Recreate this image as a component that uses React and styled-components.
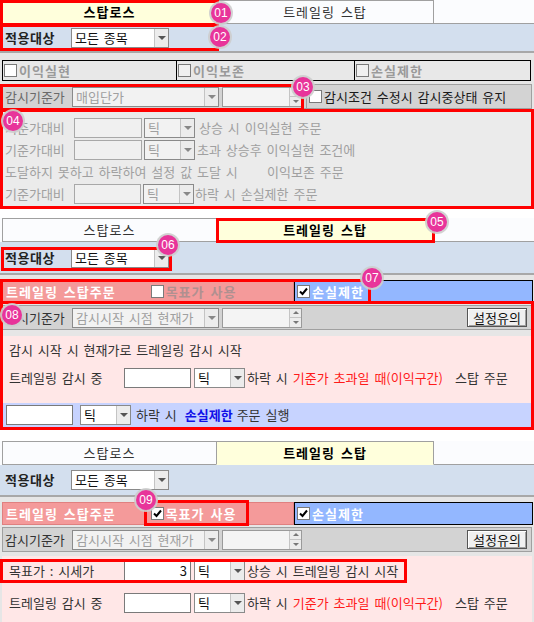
import React from "react";
import styled, { createGlobalStyle } from "styled-components";

const GlobalStyle = createGlobalStyle`
  html, body { margin: 0; padding: 0; background: #fff; }
  body {
    font-family: "Noto Sans CJK KR", "Noto Sans", sans-serif;
    font-size: 13px;
    line-height: 16px;
    word-spacing: 2px;
    color: #2a2a2a;
  }
  * { box-sizing: border-box; }
`;

const Page = styled.div`
  width: 534px;
  height: 622px;
  overflow: hidden;
  display: flex;
  flex-direction: column;
`;

const Panel = styled.div`
  position: relative;
  display: flex;
  flex-direction: column;
  background: #e6e6e6;
  margin-top: ${(p) => p.$top || 0}px;
`;

/* tabs */
const TabBar = styled.div`
  display: flex;
  height: 24px;
  padding-left: 2px;
  background: #fbfcfe;
`;

const Tab = styled.div`
  width: ${(p) => p.$w}px;
  display: flex;
  align-items: center;
  justify-content: center;
  border: 1px solid #a0a0a0;
  border-bottom-color: ${(p) => (p.$active ? "transparent" : "#a0a0a0")};
  margin-left: ${(p) => (p.$first ? 0 : -1)}px;
  background: ${(p) => (p.$active ? "#ffffdc" : "#fbfcfe")};
  font-weight: ${(p) => (p.$active ? 700 : 400)};
  color: ${(p) => (p.$active ? "#000" : "#333")};
  letter-spacing: 1px;
`;

const TabFill = styled.div`
  flex: 1;
  border-bottom: 1px solid #a0a0a0;
`;

/* 적용대상 */
const TargetRow = styled.div`
  height: ${(p) => p.$h}px;
  display: flex;
  align-items: center;
  padding-left: 5px;
  background: #d3dfee;
`;

const BoldLabel = styled.span`
  width: 66px;
  font-weight: 700;
  color: #222;
  letter-spacing: 0.5px;
`;

const Divider = styled.div`
  height: ${(p) => p.$h}px;
  border-top: 2px solid #a8a8a8;
  background: #e6e6e6;
`;

const Spacer = styled.div`
  height: ${(p) => p.$h}px;
  background: ${(p) => p.$bg || "#e6e6e6"};
`;

/* form parts */
const SelectBox = styled.div`
  display: flex;
  width: ${(p) => p.$w}px;
  height: 20px;
  margin-left: ${(p) => p.$ml || 0}px;
  border: 1px solid #8a8a8a;
  background: ${(p) => (p.$disabled ? "#f2f2f2" : "#fff")};
  color: ${(p) => (p.$disabled ? "#a0a0a0" : "#111")};
  flex-shrink: 0;
`;

const SelectText = styled.span`
  flex: 1;
  padding-left: 3px;
  line-height: 18px;
  white-space: nowrap;
  overflow: hidden;
`;

const DropBtn = styled.span`
  width: 14px;
  display: flex;
  align-items: center;
  justify-content: center;
  background: #ececec;
  border-left: 1px solid #c4c4c4;
  &::after {
    content: "";
    border-left: 4px solid transparent;
    border-right: 4px solid transparent;
    border-top: 4px solid ${(p) => (p.$disabled ? "#888" : "#555")};
  }
`;

const Select = ({ w, ml, disabled, children }) => (
  <SelectBox $w={w} $ml={ml} $disabled={disabled}>
    <SelectText>{children}</SelectText>
    <DropBtn $disabled={disabled} />
  </SelectBox>
);

const InputBox = styled.div`
  width: ${(p) => p.$w}px;
  height: 20px;
  margin-left: ${(p) => p.$ml || 0}px;
  flex-shrink: 0;
  border: 1px solid ${(p) => (p.$disabled ? "#a8a8a8" : "#7a7a7a")};
  background: ${(p) => (p.$disabled ? "#f0f0f0" : "#fff")};
  color: #111;
  text-align: right;
  padding-right: 3px;
  line-height: 18px;
`;

const SpinBox = styled.div`
  display: flex;
  width: ${(p) => p.$w}px;
  height: 20px;
  margin-left: ${(p) => p.$ml || 0}px;
  border: 1px solid #9a9a9a;
  background: #f4f4f4;
  flex-shrink: 0;
`;

const SpinButtons = styled.div`
  margin-left: auto;
  width: 12px;
  display: flex;
  flex-direction: column;
  border-left: 1px solid #c4c4c4;
`;

const SpinArrow = styled.span`
  flex: 1;
  display: flex;
  align-items: center;
  justify-content: center;
  background: #ececec;
  border-top: ${(p) => (p.$down ? "1px solid #c4c4c4" : "none")};
  &::after {
    content: "";
    border-left: 3px solid transparent;
    border-right: 3px solid transparent;
    ${(p) => (p.$down ? "border-top" : "border-bottom")}: 3px solid #777;
  }
`;

const Spinner = ({ w, ml }) => (
  <SpinBox $w={w} $ml={ml}>
    <SpinButtons>
      <SpinArrow />
      <SpinArrow $down />
    </SpinButtons>
  </SpinBox>
);

const CheckBox = styled.span`
  width: 13px;
  height: 13px;
  flex-shrink: 0;
  display: inline-flex;
  align-items: center;
  justify-content: center;
  border: 1px solid #7a7a7a;
  background: ${(p) => (p.$disabled ? "#f0f0f0" : "#fff")};
  margin: 0 2px 0 ${(p) => p.$ml || 0}px;
`;

const Check = ({ checked, disabled, ml }) => (
  <CheckBox $disabled={disabled} $ml={ml}>
    {checked && (
      <svg width="9" height="9" viewBox="0 0 9 9">
        <polyline points="1,4.5 3.5,7 8,1.5" fill="none" stroke="#000" strokeWidth="2" />
      </svg>
    )}
  </CheckBox>
);

/* 이익실현/이익보존/손실제한 */
const CheckRow = styled.div`
  display: flex;
  height: 21px;
  padding: 0 2px;
`;

const CheckCell = styled.div`
  width: ${(p) => p.$w}px;
  display: flex;
  align-items: center;
  padding-left: 1px;
  margin-left: ${(p) => (p.$first ? 0 : -1)}px;
  border: 1px solid #000;
  background: #e8e8e8;
  font-weight: 700;
  color: #9a9a9a;
  letter-spacing: 1px;
`;

/* 감시기준가 */
const BaseRow = styled.div`
  height: 25px;
  margin: 0 2px;
  display: flex;
  align-items: center;
  border: 1px solid #a0a0a0;
  background: #d3d3d3;
`;

const BaseLabel = styled.span`
  width: 69px;
  padding-left: 2px;
  color: ${(p) => (p.$disabled ? "#6a6a6a" : "#333")};
`;

const KeepCell = styled.div`
  margin-left: 4px;
  align-self: stretch;
  flex: 1;
  display: flex;
  align-items: center;
  border-left: 1px solid #a0a0a0;
  color: #1a1a1a;
`;

const WinButton = styled.button`
  margin-left: auto;
  margin-right: 4px;
  width: 60px;
  height: 19px;
  padding: 0;
  font: inherit;
  color: #111;
  background: #f0f0f0;
  border: 1px solid #555;
  box-shadow: inset 1px 1px 0 #fff, inset -1px -1px 0 #a0a0a0;
`;

/* disabled stop-loss body */
const GrayBody = styled.div`
  height: 99px;
  padding-top: 8px;
  background: #ebebeb;
  color: #a0a0a0;
  display: flex;
  flex-direction: column;
`;

const FormRow = styled.div`
  height: ${(p) => p.$h || 22}px;
  display: flex;
  align-items: center;
  padding-left: ${(p) => p.$pl || 5}px;
  white-space: nowrap;
  background: ${(p) => p.$bg || "transparent"};
`;

const RowLabel = styled.span`
  width: ${(p) => p.$w}px;
  flex-shrink: 0;
`;

const Txt = styled.span`
  margin-left: ${(p) => p.$ml || 0}px;
  color: ${(p) => p.$color || "inherit"};
  font-weight: ${(p) => (p.$bold ? 700 : 400)};
  display: inline-block;
  width: ${(p) => (p.$w ? `${p.$w}px` : "auto")};
`;

/* trailing order bar */
const OrderBar = styled.div`
  height: 23px;
  display: flex;
  padding: 0 1px 0 2px;
`;

const PinkCell = styled.div`
  width: 292px;
  display: flex;
  align-items: center;
  padding-left: 3px;
  background: #f49a9a;
  border: 1px solid #e08080;
  font-weight: 700;
  color: #fff;
  letter-spacing: 1px;
`;

const BlueCell = styled.div`
  flex: 1;
  display: flex;
  align-items: center;
  padding-left: 2px;
  background: #93b7ff;
  border: 1px solid #000;
  font-weight: 700;
  color: #fff;
  letter-spacing: 1px;
`;

const GoalText = styled.span`
  color: ${(p) => (p.$on ? "#fff" : "#b09090")};
`;

const PinkBody = styled.div`
  display: flex;
  flex-direction: column;
  gap: ${(p) => p.$gap || 0}px;
  padding-top: ${(p) => p.$pt || 0}px;
  height: ${(p) => p.$h}px;
  background: #ffe7e7;
  color: #333;
  margin: 0 2px;
`;

const BlueRow = styled(FormRow)`
  margin: 0 2px;
  background: #c7d3ff;
  color: #333;
`;

/* annotations */
const Highlight = styled.div`
  position: absolute;
  left: ${(p) => p.$x}px;
  top: ${(p) => p.$y}px;
  width: ${(p) => p.$w}px;
  height: ${(p) => p.$h}px;
  border: 3px solid #ff0000;
  pointer-events: none;
`;

const Marker = styled.div`
  position: absolute;
  left: ${(p) => p.$x - 10}px;
  top: ${(p) => p.$y - 10}px;
  width: 20px;
  height: 20px;
  border-radius: 50%;
  background: #e8349a;
  box-shadow: 0 0 0 2px rgba(205, 205, 205, 0.9);
  color: #fff;
  font-family: "Liberation Sans", Arial, sans-serif;
  font-size: 12px;
  line-height: 20px;
  word-spacing: 0;
  text-align: center;
`;

const Tabs = ({ active }) => (
  <TabBar>
    <Tab $w={215} $first $active={active === 0}>스탑로스</Tab>
    <Tab $w={218} $active={active === 1}>트레일링 스탑</Tab>
    <TabFill />
  </TabBar>
);

const Target = ({ h }) => (
  <TargetRow $h={h}>
    <BoldLabel>적용대상</BoldLabel>
    <Select w={98}>모든 종목</Select>
  </TargetRow>
);

const TrailBase = () => (
  <BaseRow>
    <BaseLabel>감시기준가</BaseLabel>
    <Select w={147} disabled>감시시작 시점 현재가</Select>
    <Spinner w={80} ml={3} />
    <WinButton>설정유의</WinButton>
  </BaseRow>
);

const Order = ({ goal }) => (
  <OrderBar>
    <PinkCell>
      트레일링 스탑주문
      <Check ml={35} checked={goal} />
      <GoalText $on={goal}>목표가 사용</GoalText>
    </PinkCell>
    <BlueCell>
      <Check checked />
      손실제한
    </BlueCell>
  </OrderBar>
);

const TrailRow = () => (
  <FormRow $h={28} $pl={7}>
    <RowLabel $w={115}>트레일링 감시 중</RowLabel>
    <InputBox $w={67} />
    <Select w={51} ml={3}>틱</Select>
    <Txt $ml={2}>하락 시</Txt>
    <Txt $ml={5} $color="#ff1a1a">기준가 초과일 때(이익구간)</Txt>
    <Txt $ml={12}>스탑 주문</Txt>
  </FormRow>
);

export default function App() {
  return (
    <Page>
      <GlobalStyle />

      <Panel>
        <Tabs active={0} />
        <Target h={27} />
        <Divider $h={9} />
        <CheckRow>
          <CheckCell $w={175} $first>
            <Check />
            이익실현
          </CheckCell>
          <CheckCell $w={179}>
            <Check disabled />
            이익보존
          </CheckCell>
          <CheckCell $w={177}>
            <Check disabled />
            손실제한
          </CheckCell>
        </CheckRow>
        <Spacer $h={3} />
        <BaseRow>
          <BaseLabel $disabled>감시기준가</BaseLabel>
          <Select w={147} disabled>매입단가</Select>
          <Spinner w={80} ml={3} />
          <KeepCell>
            <Check ml={2} />
            감시조건 수정시 감시중상태 유지
          </KeepCell>
        </BaseRow>
        <GrayBody>
          <FormRow>
            <RowLabel $w={69}>기준가대비</RowLabel>
            <InputBox $w={68} $disabled />
            <Select w={51} ml={2} disabled>틱</Select>
            <Txt $ml={4}>상승 시 이익실현 주문</Txt>
          </FormRow>
          <FormRow>
            <RowLabel $w={69}>기준가대비</RowLabel>
            <InputBox $w={68} $disabled />
            <Select w={51} ml={2} disabled>틱</Select>
            <Txt $ml={2}>초과 상승후 이익실현 조건에</Txt>
          </FormRow>
          <FormRow>
            <Txt $w={262}>도달하지 못하고 하락하여 설정 값 도달 시</Txt>
            <Txt>이익보존 주문</Txt>
          </FormRow>
          <FormRow>
            <RowLabel $w={69}>기준가대비</RowLabel>
            <InputBox $w={67} $disabled />
            <Select w={51} ml={2} disabled>틱</Select>
            <Txt $ml={1}>하락 시 손실제한 주문</Txt>
          </FormRow>
        </GrayBody>

        <Highlight $x={0} $y={0} $w={219} $h={26} />
        <Highlight $x={0} $y={24} $w={219} $h={27} />
        <Highlight $x={0} $y={84} $w={304} $h={27} />
        <Highlight $x={0} $y={109} $w={534} $h={100} />
        <Marker $x={221} $y={13}>01</Marker>
        <Marker $x={220} $y={37}>02</Marker>
        <Marker $x={303} $y={87}>03</Marker>
        <Marker $x={13} $y={121}>04</Marker>
      </Panel>

      <Panel $top={10}>
        <Tabs active={1} />
        <Target h={31} />
        <Divider $h={7} />
        <Order goal={false} />
        <Spacer $h={2} />
        <TrailBase />
        <Spacer $h={6} />
        <PinkBody $h={67}>
          <FormRow $h={28} $pl={7}>감시 시작 시 현재가로 트레일링 감시 시작</FormRow>
          <TrailRow />
        </PinkBody>
        <BlueRow $h={24} $pl={4}>
          <InputBox $w={67} />
          <Select w={51} ml={7}>틱</Select>
          <Txt $ml={5}>하락 시</Txt>
          <Txt $ml={8} $bold $color="#1010e8">손실제한</Txt>
          <Txt $ml={4}>주문 실행</Txt>
        </BlueRow>
        <Spacer $h={2} />

        <Highlight $x={216} $y={0} $w={219} $h={25} />
        <Highlight $x={1} $y={29} $w={171} $h={24} />
        <Highlight $x={0} $y={61} $w={371} $h={25} />
        <Highlight $x={0} $y={83} $w={534} $h={129} />
        <Marker $x={437} $y={4}>05</Marker>
        <Marker $x={168} $y={27}>06</Marker>
        <Marker $x={372} $y={60}>07</Marker>
        <Marker $x={12} $y={97}>08</Marker>
      </Panel>

      <Panel $top={12}>
        <Tabs active={1} />
        <Target h={30} />
        <Divider $h={7} />
        <Order goal />
        <Spacer $h={2} />
        <TrailBase />
        <Spacer $h={4} />
        <PinkBody $h={70} $pt={1} $gap={4}>
          <FormRow $h={28} $pl={7}>
            <RowLabel $w={115}>목표가 : 시세가</RowLabel>
            <InputBox $w={67}>3</InputBox>
            <Select w={51} ml={3}>틱</Select>
            <Txt $ml={2}>상승 시 트레일링 감시 시작</Txt>
          </FormRow>
          <TrailRow />
        </PinkBody>

        <Highlight $x={144} $y={59} $w={105} $h={26} />
        <Highlight $x={0} $y={118} $w={407} $h={24} />
        <Marker $x={146} $y={59}>09</Marker>
      </Panel>
    </Page>
  );
}
